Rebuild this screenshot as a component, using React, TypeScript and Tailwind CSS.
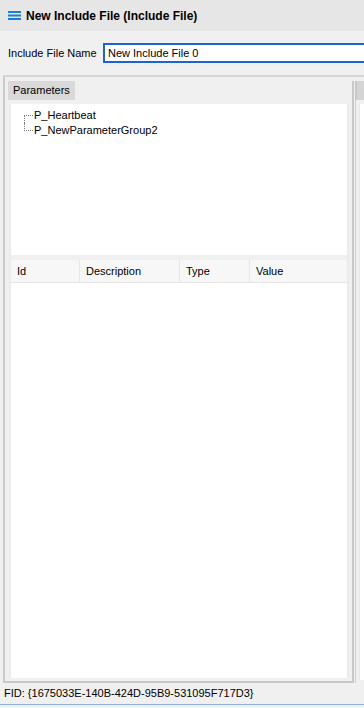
import React from "react";

const font = { fontFamily: '"Liberation Sans", Arial, sans-serif' };

function MenuIcon() {
  return (
    <svg width="13" height="9" viewBox="0 0 13 9" className="shrink-0">
      <rect x="0" y="0" width="13" height="2" fill="#1a7fd4" />
      <rect x="0" y="3.5" width="13" height="2" fill="#1a7fd4" />
      <rect x="0" y="7" width="13" height="2" fill="#1a7fd4" />
    </svg>
  );
}

function TreeItem({ label, last }: { label: string; last?: boolean }) {
  return (
    <div className="flex items-center h-[15px]">
      <div className="relative w-[10px] h-full shrink-0">
        <div
          className={`absolute left-0 border-l border-dotted border-[#7a7a7a] ${
            last ? "top-0 h-[8px]" : "top-[7px] h-[8px]"
          }`}
        />
        <div className="absolute left-0 top-[7px] w-[9px] border-t border-dotted border-[#7a7a7a]" />
      </div>
      <span className="text-[11px] leading-[15px] whitespace-nowrap">{label}</span>
    </div>
  );
}

export default function App() {
  const cols = [
    { name: "Id", w: "w-[69px]" },
    { name: "Description", w: "w-[100px]" },
    { name: "Type", w: "w-[70px]" },
    { name: "Value", w: "flex-1" },
  ];

  return (
    <div
      className="w-[364px] h-[708px] bg-[#f0f0f0] flex flex-col overflow-hidden text-black"
      style={font}
    >
      {/* Title bar */}
      <div className="h-[31px] bg-[#e6e6e6] flex items-center pl-[8px] gap-[5px] shrink-0">
        <MenuIcon />
        <span className="text-[12px] font-bold whitespace-nowrap">New Include File (Include File)</span>
      </div>

      {/* Name row */}
      <div className="h-[44px] flex items-center pl-[8px] shrink-0">
        <span className="text-[11px] w-[95px] whitespace-nowrap">Include File Name</span>
        <div className="flex-1 h-[20px] border-2 border-r-0 border-[#1e63d6] bg-white flex items-center pl-[3px]">
          <span className="text-[11px] leading-none whitespace-nowrap">New Include File 0</span>
        </div>
      </div>

      {/* Panels area */}
      <div className="flex-1 flex flex-col border-t-2 border-[#d6d6d6] ml-[3px] min-h-0">
        <div className="flex-1 flex min-h-0">
          {/* Left panel */}
          <div className="w-[351px] flex flex-col border-l-2 border-[#cbcbcb] pt-[4px] min-h-0">
            <div className="flex h-[19px] shrink-0">
              <div className="ml-[3px] px-[5px] bg-[#d9d9d9] flex items-center">
                <span className="text-[11px] whitespace-nowrap">Parameters</span>
              </div>
              <div className="flex-1 border-r-2 border-[#c8c8c8]" />
            </div>
            <div className="flex-1 flex flex-col border-2 border-l-0 border-t-0 border-[#c8c8c8] bg-[#f0f0f0] pl-[4px] pr-[3px] pt-[4px] pb-[3px] min-h-0">
              <div className="flex-1 flex flex-col bg-white border-x-2 border-l-[#ebebeb] border-r-[#ebebeb] min-h-0">
                {/* Tree */}
                <div className="h-[151px] pl-[13px] pt-[4px] shrink-0">
                  <TreeItem label="P_Heartbeat" />
                  <TreeItem label="P_NewParameterGroup2" last />
                </div>
                <div className="h-[5px] bg-[#f0f0f0] shrink-0" />
                {/* Table header */}
                <div className="h-[23px] flex bg-[#f7f7f7] border-b border-[#e4e4e4] shrink-0">
                  {cols.map((c, i) => (
                    <div
                      key={c.name}
                      className={`${c.w} flex items-center pl-[6px] ${
                        i < cols.length - 1 ? "border-r border-[#e6e6e6]" : ""
                      }`}
                    >
                      <span className="text-[11px] whitespace-nowrap">{c.name}</span>
                    </div>
                  ))}
                </div>
                <div className="flex-1 bg-white" />
              </div>
            </div>
          </div>

          {/* Right panel sliver */}
          <div className="flex-1 flex flex-col pt-[4px] pl-[1px]">
            <div className="h-[19px] border-l-2 border-[#c8c8c8] bg-[#d4d4d4]" />
            <div className="flex-1 border-l border-[#d0d0d0] bg-[#f0f0f0] pl-[3px] pt-[4px] pb-[3px]">
              <div className="h-full bg-white border-l border-[#ebebeb]" />
            </div>
          </div>
        </div>

        {/* Footer */}
        <div className="h-[21px] flex items-center -ml-[3px] pl-[4px] shrink-0">
          <span className="text-[11px] whitespace-nowrap">FID: {"{1675033E-140B-424D-95B9-531095F717D3}"}</span>
        </div>
        <div className="h-[4px] -ml-[3px] border-t border-[#8fb0e0] shrink-0" />
      </div>
    </div>
  );
}
